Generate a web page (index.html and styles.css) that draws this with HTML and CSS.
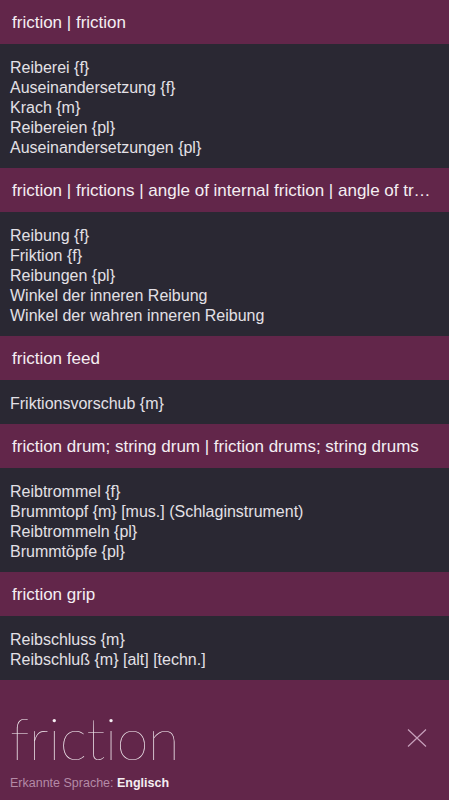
FILE: index.html
```html
<!DOCTYPE html>
<html>
<head>
    <meta charset="UTF-8">
    <meta name="viewport" content="width=device-width, initial-scale=1.0">
    <title>friction</title>
    <link rel="stylesheet" href="styles.css">
</head>
<body>
    <div class="results">
        <div class="term">friction | friction</div>
        <div class="meanings">
            <p>Reiberei {f}</p>
            <p>Auseinandersetzung {f}</p>
            <p>Krach {m}</p>
            <p>Reibereien {pl}</p>
            <p>Auseinandersetzungen {pl}</p>
        </div>

        <div class="term">friction | frictions | angle of internal friction | angle of tr…</div>
        <div class="meanings">
            <p>Reibung {f}</p>
            <p>Friktion {f}</p>
            <p>Reibungen {pl}</p>
            <p>Winkel der inneren Reibung</p>
            <p>Winkel der wahren inneren Reibung</p>
        </div>

        <div class="term">friction feed</div>
        <div class="meanings">
            <p>Friktionsvorschub {m}</p>
        </div>

        <div class="term">friction drum; string drum | friction drums; string drums</div>
        <div class="meanings">
            <p>Reibtrommel {f}</p>
            <p>Brummtopf {m} [mus.] (Schlaginstrument)</p>
            <p>Reibtrommeln {pl}</p>
            <p>Brummtöpfe {pl}</p>
        </div>

        <div class="term">friction grip</div>
        <div class="meanings">
            <p>Reibschluss {m}</p>
            <p>Reibschluß {m} [alt] [techn.]</p>
        </div>
    </div>

    <div class="search">
        <div class="search-row">
            <div class="query">friction</div>
            <button class="clear" aria-label="clear">
                <svg width="20" height="18" viewBox="0 0 20 18">
                    <path d="M1 0.5 L19 17.5 M19 0.5 L1 17.5" stroke="#c7a0bb" stroke-width="1.2" fill="none"/>
                </svg>
            </button>
        </div>
        <div class="lang">Erkannte Sprache: <b>Englisch</b></div>
    </div>
</body>
</html>
```

FILE: styles.css
```css
body {
    margin: 0;
    background: #2a2833;
    font-family: 'Liberation Sans', Arial, sans-serif;
    color: #e3e0e6;
}

.results {
    display: flex;
    flex-direction: column;
}

.term {
    background: #62264a;
    height: 44px;
    box-sizing: border-box;
    padding: 2px 12px 0;
    line-height: 42px;
    font-size: 17px;
    color: #f4eef2;
    white-space: nowrap;
    overflow: hidden;
    text-overflow: ellipsis;
}

.meanings {
    background: #2a2833;
    padding: 14px 10px 10px;
}

.meanings p {
    margin: 0;
    font-size: 16px;
    line-height: 20px;
}

.search {
    background: #62264a;
    height: 120px;
    padding: 0 10px;
    box-sizing: border-box;
}

.search-row {
    display: flex;
    align-items: center;
    justify-content: space-between;
    padding-top: 28px;
}

.query {
    font-family: 'Lato', 'Liberation Sans', sans-serif;
    font-weight: 100;
    font-size: 58px;
    line-height: 60px;
    letter-spacing: -0.5px;
    color: #f6f0f4;
}

.clear {
    background: none;
    border: 0;
    padding: 0;
    margin-right: 12px;
    display: flex;
}

.lang {
    margin-top: 8px;
    font-size: 12.5px;
    color: #b48aa6;
}

.lang b {
    color: #f4eef2;
}
```
